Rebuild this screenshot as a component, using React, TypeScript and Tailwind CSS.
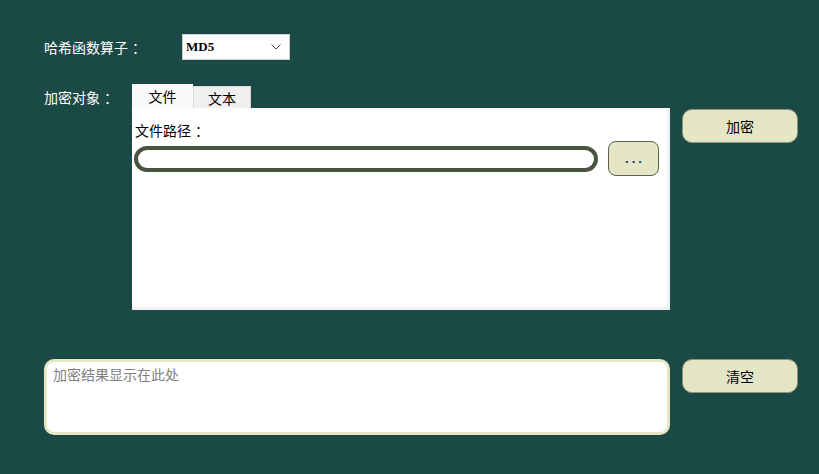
import React, { useState } from 'react';

const cjk = "font-['Noto_Sans_CJK_SC','Microsoft_YaHei',sans-serif]";

export default function App() {
    const [tab, setTab] = useState<'file' | 'text'>('file');
    const [algo, setAlgo] = useState('MD5');
    const [result, setResult] = useState('');

    return (
        <div className={`w-[819px] h-[474px] bg-[#1b4946] pl-[44px] pt-[34px] text-[14px] ${cjk}`}>
            {/* Hash algorithm */}
            <div className="flex items-center h-[26px]">
                <span className="w-[138px] text-white leading-none">哈希函数算子<span className="inline-block w-[14px] pl-[4px]">：</span></span>
                <div className="relative w-[108px] h-[26px] bg-white border border-[#d0d0d0]">
                    <select
                        value={algo}
                        onChange={(e) => setAlgo(e.target.value)}
                        className="w-full h-full appearance-none bg-transparent pl-[3px] text-[13px] font-bold text-black font-['Liberation_Serif',serif] outline-none"
                    >
                        <option>MD5</option>
                        <option>SHA1</option>
                        <option>SHA256</option>
                    </select>
                    <svg className="absolute right-[8px] top-[9px] pointer-events-none" width="10" height="6" viewBox="0 0 10 6">
                        <path d="M0.5 0.5 L5 5 L9.5 0.5" fill="none" stroke="#444" strokeWidth="1" />
                    </svg>
                </div>
            </div>

            {/* Target */}
            <div className="flex mt-[24px]">
                <span className="w-[88px] pt-[4px] text-white leading-[18px]">加密对象<span className="inline-block w-[14px] pl-[4px]">：</span></span>
                <div className="flex flex-col">
                    <div className="flex items-end h-[24px]">
                        <button
                            onClick={() => setTab('file')}
                            className={`w-[61px] text-black leading-none ${tab === 'file' ? 'h-[24px] bg-[#f9f9f9]' : 'h-[22px] bg-[#f0f0f0] border border-[#d9d9d9] border-b-0'}`}
                        >
                            文件
                        </button>
                        <button
                            onClick={() => setTab('text')}
                            className={`w-[58px] text-black leading-none ${tab === 'text' ? 'h-[24px] bg-[#f9f9f9]' : 'h-[22px] bg-[#f0f0f0] border border-[#d9d9d9] border-b-0'}`}
                        >
                            文本
                        </button>
                    </div>
                    <div className="w-[538px] h-[202px] bg-white border-r-[3px] border-b-[3px] border-[#f1f1f1] pl-[2px] pr-[7px]">
                        {tab === 'file' ? (
                            <>
                                <div className="pl-[1px] pt-[15px] text-black leading-none">文件路径<span className="inline-block w-[14px] pl-[4px]">：</span></div>
                                <div className="flex items-center mt-[4px] pr-[1px]">
                                    <input className="w-[464px] h-[26px] rounded-full border-[4px] border-[#4a5240] bg-white px-[8px] outline-none" />
                                    <button className="ml-auto w-[51px] h-[35px] rounded-[8px] bg-[#e4e6c6] border border-[#56604c] text-[#1a3550] text-[13px] font-bold leading-none tracking-[3px] pl-[3px] font-['Liberation_Sans',sans-serif]">
                                        ...
                                    </button>
                                </div>
                            </>
                        ) : (
                            <textarea className="w-full h-full mt-[4px] resize-none outline-none" />
                        )}
                    </div>
                </div>
                <div className="ml-[12px] pt-[25px]">
                    <button className="w-[116px] h-[34px] rounded-[10px] bg-[#e4e6c6] border border-[#8e957a] text-black leading-none">
                        加密
                    </button>
                </div>
            </div>

            {/* Result */}
            <div className="flex items-start mt-[49px]">
                <textarea
                    value={result}
                    onChange={(e) => setResult(e.target.value)}
                    placeholder="加密结果显示在此处"
                    className="w-[626px] h-[76px] rounded-[10px] border-[3px] border-[#e4e6c6] bg-white px-[6px] py-[3px] text-[14px] leading-[18px] text-black placeholder:text-[#808080] resize-none outline-none"
                />
                <button
                    onClick={() => setResult('')}
                    className="ml-[12px] w-[116px] h-[34px] rounded-[10px] bg-[#e4e6c6] border border-[#8e957a] text-black leading-none"
                >
                    清空
                </button>
            </div>
        </div>
    );
}
